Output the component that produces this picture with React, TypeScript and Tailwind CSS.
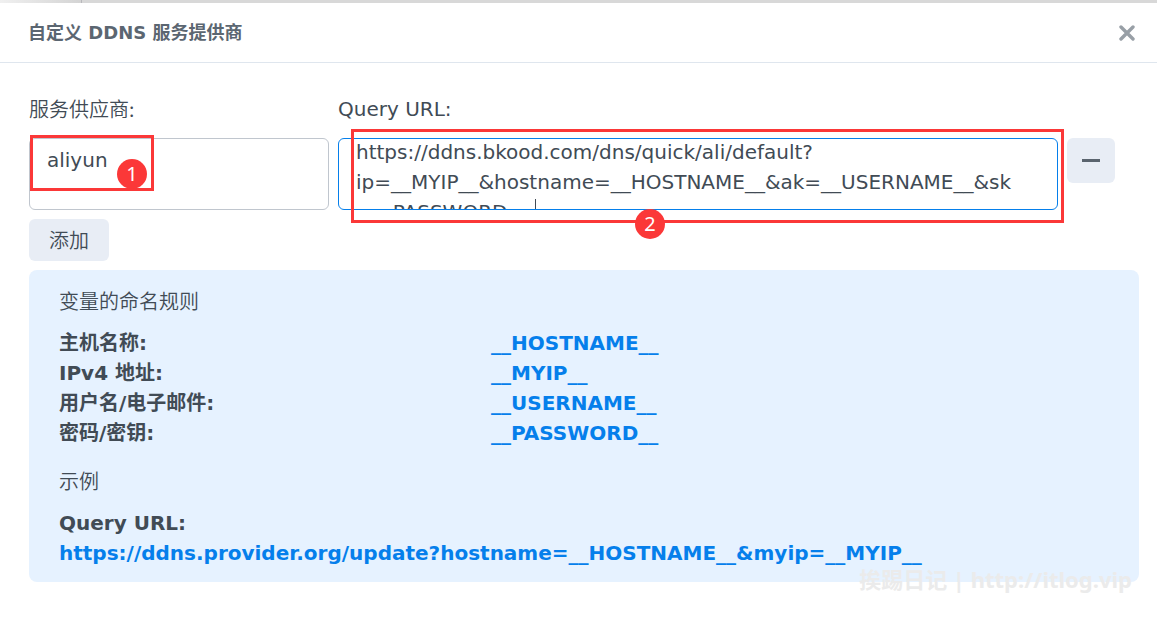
import { useLayoutEffect, useRef } from "react";

const QUERY_URL =
  "https://ddns.bkood.com/dns/quick/ali/default?ip=__MYIP__&hostname=__HOSTNAME__&ak=__USERNAME__&sk=__PASSWORD__";

const variables = [
  { label: "主机名称:", value: "__HOSTNAME__" },
  { label: "IPv4 地址:", value: "__MYIP__" },
  { label: "用户名/电子邮件:", value: "__USERNAME__" },
  { label: "密码/密钥:", value: "__PASSWORD__" },
];

function Badge({ n, className }: { n: number; className: string }) {
  return (
    <span
      className={`absolute flex size-[30px] items-center justify-center rounded-full bg-[#fb3838] font-['Noto_Sans','Noto_Sans_CJK_SC',sans-serif] text-xl leading-none text-white ${className}`}
    >
      {n}
    </span>
  );
}

export default function App() {
  const urlRef = useRef<HTMLTextAreaElement>(null);

  useLayoutEffect(() => {
    if (urlRef.current) urlRef.current.scrollTop = 2;
  }, []);

  return (
    <div className="min-h-screen bg-white font-['DejaVu_Sans','Noto_Sans_CJK_SC',sans-serif] text-[20px] leading-[30px] text-[#414b55]">
      <div className="flex h-[3px] bg-[#d8d8d8]">
        <div className="w-[82px] border-r border-[#b8b8bc] bg-linear-to-r from-[#f0f0f0] to-[#d4d4d4]" />
      </div>

      <header className="flex h-[60px] items-center justify-between border-b border-[#dfe6ee] pt-px pr-[21px] pl-[28px]">
        <h1 className="text-[18px] font-bold text-[#5b6671]">自定义 DDNS 服务提供商</h1>
        <button type="button" aria-label="关闭" className="p-px">
          <svg viewBox="0 0 16 16" className="size-4" fill="none" stroke="#989fa6" strokeWidth="3.4" strokeLinecap="round">
            <path d="M2 2 L14 14 M14 2 L2 14" />
          </svg>
        </button>
      </header>

      <main className="relative pt-[31px] pr-[18px] pl-[29px]">
        <div className="grid grid-cols-[300px_1fr_48px] gap-x-[9px] gap-y-[14px] pr-6">
          <label htmlFor="provider" className="font-['Noto_Sans_CJK_SC',sans-serif] font-[350]">
            服务供应商:
          </label>
          <label htmlFor="query-url" className="col-span-2">
            Query URL:
          </label>

          <div className="relative">
            <textarea
              id="provider"
              defaultValue="aliyun"
              className="block h-[72px] w-full resize-none overflow-hidden rounded-md border border-[#c0c6ce] px-[17px] py-[6px] outline-none"
            />
            <div className="pointer-events-none absolute -top-[3px] left-px h-14 w-[124px] border-3 border-[#fb3838]" />
            <Badge n={1} className="top-[21px] left-[88px]" />
          </div>

          <div className="relative">
            <textarea
              id="query-url"
              ref={urlRef}
              spellCheck={false}
              defaultValue={QUERY_URL}
              className="block h-[72px] w-full resize-none overflow-hidden rounded-md border border-[#057feb] pr-[38px] pl-[17px] outline-none"
            />
            <span className="absolute bottom-px left-[197px] h-[10px] w-px bg-[#414b55]" />
            <div className="pointer-events-none absolute -top-[9px] -right-[6px] left-[13px] h-[94px] border-3 border-[#fb3838]" />
            <Badge n={2} className="top-[71px] left-[297px]" />
          </div>

          <button
            type="button"
            aria-label="删除"
            className="flex h-[45px] items-center justify-center rounded-md bg-[#e8edf5]"
          >
            <span className="h-[3px] w-[18px] bg-[#5a646e]" />
          </button>
        </div>

        <button
          type="button"
          className="mt-[9px] block h-[42px] rounded-md bg-[#e8edf5] px-5 font-['Noto_Sans_CJK_SC',sans-serif] font-[350]"
        >
          添加
        </button>

        <section className="mt-[9px] rounded-lg bg-[#e6f2ff] px-[30px] pt-4 pb-[14px]">
          <h2 className="font-['Noto_Sans_CJK_SC',sans-serif] font-[350]">变量的命名规则</h2>
          <table className="mt-3 w-full table-fixed border-collapse text-left font-bold">
            <tbody>
              {variables.map((v) => (
                <tr key={v.value} className="h-[30px]">
                  <th scope="row" className="w-[432px] p-0">
                    {v.label}
                  </th>
                  <td className="p-0 text-[#057feb]">{v.value}</td>
                </tr>
              ))}
            </tbody>
          </table>
          <h2 className="mt-[18px] font-['Noto_Sans_CJK_SC',sans-serif] font-[350]">示例</h2>
          <p className="mt-3 font-bold">Query URL:</p>
          <p className="font-bold break-all text-[#057feb]">
            https://ddns.provider.org/update?hostname=__HOSTNAME__&amp;myip=__MYIP__
          </p>
        </section>

        <div className="pointer-events-none absolute right-[25px] -bottom-3 font-['Noto_Sans','Noto_Sans_CJK_SC',sans-serif] text-[22px] font-bold whitespace-nowrap text-[#ebebeb]">
          挨踢日记 | http://itlog.vip
        </div>
      </main>
    </div>
  );
}
